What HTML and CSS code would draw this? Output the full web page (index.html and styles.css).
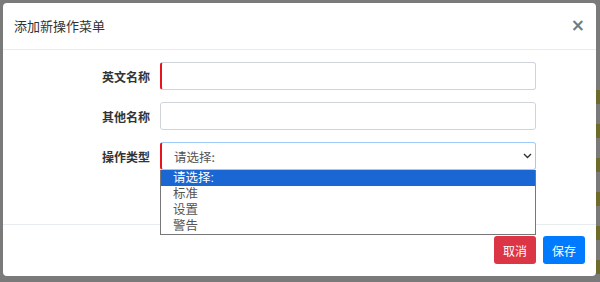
FILE: index.html
```html
<!DOCTYPE html>
<html lang="zh">
<head>
<meta charset="utf-8">
<link rel="stylesheet" href="styles.css">
</head>
<body>
<div class="backdrop">
  <div class="bg-strip"></div>
  <div class="modal">
    <div class="modal-header">
      <h5 class="modal-title">添加新操作菜单</h5>
      <span class="close">×</span>
    </div>
    <div class="modal-body">
      <div class="row">
        <label class="label">英文名称</label>
        <div class="input required"></div>
      </div>
      <div class="row">
        <label class="label">其他名称</label>
        <div class="input"></div>
      </div>
      <div class="row select-row">
        <label class="label">操作类型</label>
        <div class="input required focused">
          <span class="select-text">请选择:</span>
          <svg class="chev" width="9" height="6" viewBox="0 0 9 6"><path d="M1 1 L4.5 4.5 L8 1" fill="none" stroke="#333" stroke-width="1.4"/></svg>
        </div>
        <ul class="dropdown">
          <li class="active">请选择:</li>
          <li>标准</li>
          <li>设置</li>
          <li>警告</li>
        </ul>
      </div>
      <div class="row hidden-row">
        <div class="label"></div>
        <div class="ghost-box"></div>
      </div>
    </div>
    <div class="modal-footer">
      <button class="btn btn-danger">取消</button>
      <button class="btn btn-primary">保存</button>
    </div>
  </div>
</div>
</body>
</html>
```

FILE: styles.css
```css
* { box-sizing: border-box; }
html, body { margin: 0; padding: 0; }
body {
  width: 600px;
  height: 282px;
  overflow: hidden;
  background: #7a7a7a;
  font-family: "Noto Sans CJK SC", "Noto Sans", sans-serif;
}
.backdrop {
  position: relative;
  width: 600px;
  height: 282px;
  padding: 3px 4px 0 3px;
}
.bg-strip {
  position: absolute;
  right: 0;
  top: 90px;
  width: 4px;
  height: 192px;
  background: repeating-linear-gradient(#6e6a2a 0 14px, #7a7a7a 14px 34px);
}
.modal {
  position: relative;
  width: 593px;
  height: 273px;
  background: #fff;
  border-radius: 4px;
  display: flex;
  flex-direction: column;
}
.modal-header {
  height: 47px;
  border-bottom: 1px solid #e9ecef;
  display: flex;
  align-items: center;
  justify-content: space-between;
  padding: 0 11px 0 11px;
}
.modal-title {
  margin: 0;
  font-size: 13px;
  font-weight: normal;
  color: #333;
  line-height: 1;
  padding-bottom: 2px;
}
.close {
  font-family: "DejaVu Sans", sans-serif;
  font-size: 17px;
  font-weight: bold;
  color: #787878;
  line-height: 1;
  padding-bottom: 2px;
}
.modal-body {
  flex: 1;
  padding: 12px 0 0 0;
  display: flex;
  flex-direction: column;
  gap: 12px;
}
.row {
  display: flex;
  align-items: center;
  height: 28px;
  position: relative;
}
.label {
  width: 147px;
  text-align: right;
  font-size: 12px;
  font-weight: bold;
  color: #333;
  margin-right: 10px;
}
.input {
  width: 376px;
  height: 28px;
  border: 1px solid #ced4da;
  border-radius: 3px;
  background: #fff;
  display: flex;
  align-items: center;
  justify-content: space-between;
}
.input.required {
  border-left: 2px solid #e8141d;
}
.input.focused {
  border-color: #9ecbf7;
  border-left-color: #e8141d;
}
.select-text {
  font-size: 12.5px;
  color: #555;
  padding-left: 12px;
}
.chev { margin-right: 3px; }
.dropdown {
  position: absolute;
  z-index: 2;
  left: 157px;
  top: 28px;
  width: 376px;
  margin: 0;
  padding: 0;
  list-style: none;
  background: #fff;
  border: 1px solid #777;
  border-top: none;
  font-family: "Liberation Sans", "Noto Sans CJK SC", sans-serif;
}
.dropdown li {
  height: 16px;
  line-height: 16px;
  font-size: 12.5px;
  color: #555;
  padding-left: 12px;
}
.dropdown li.active {
  background: #1a66d3;
  color: #fff;
}
.hidden-row { height: 16px; margin-top: 1px; }
.ghost-box {
  width: 20px;
  height: 16px;
  border: 1px solid #ddd;
  border-radius: 2px;
}
.modal-footer {
  height: 52px;
  border-top: 1px solid #e9ecef;
  display: flex;
  justify-content: flex-end;
  align-items: flex-start;
  gap: 7px;
  padding: 11px 11px 0 0;
}
.btn {
  border: none;
  border-radius: 3px;
  height: 28px;
  width: 42px;
  padding: 0;
  font-family: "Noto Sans CJK SC", sans-serif;
  font-size: 12px;
  color: #fff;
}
.btn-danger { background: #dc3545; }
.btn-primary { background: #007bff; }
```
